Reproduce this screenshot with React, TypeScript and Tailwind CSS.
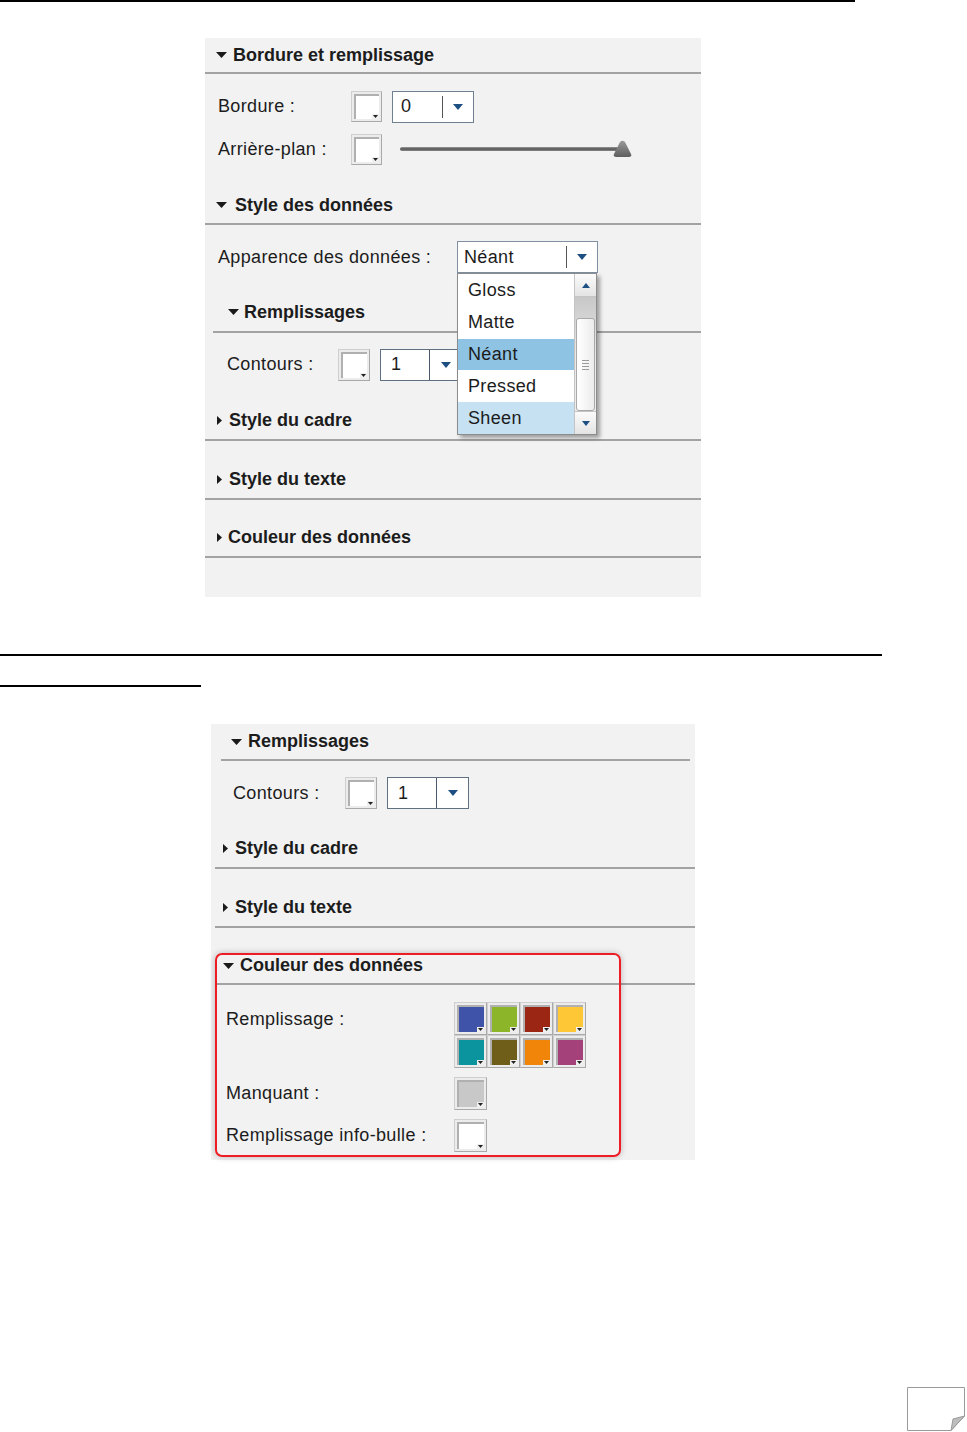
import React from "react";

const TriDown = () => (
  <svg width="11" height="6" viewBox="0 0 11 6" className="shrink-0">
    <path d="M0 0H11L5.5 6Z" fill="#1a1a1a" />
  </svg>
);
const TriRight = () => (
  <svg width="5" height="9" viewBox="0 0 5 9" className="shrink-0">
    <path d="M0 0L5 4.5L0 9Z" fill="#1a1a1a" />
  </svg>
);
const BlueTri = ({ up = false }: { up?: boolean }) => (
  <svg width="10" height="6" viewBox="0 0 10 6" className="shrink-0">
    <path d={up ? "M0 6H10L5 0Z" : "M0 0H10L5 6Z"} fill="#1d4f82" />
  </svg>
);
const SmallTri = ({ up = false }: { up?: boolean }) => (
  <svg width="8" height="5" viewBox="0 0 8 5" className="shrink-0">
    <path d={up ? "M0 5H8L4 0Z" : "M0 0H8L4 5Z"} fill="#1d4f82" />
  </svg>
);

function Header({
  label,
  open,
  cls,
  gap = "ml-[7px]",
}: {
  label: string;
  open?: boolean;
  cls: string;
  gap?: string;
}) {
  return (
    <div className={`flex items-center border-b-2 border-[#a3a3a3] ${cls}`}>
      {open ? <TriDown /> : <TriRight />}
      <span className={`font-bold text-[18px] tracking-[0px] text-[#1c1c1c] ${gap}`}>{label}</span>
    </div>
  );
}

function Swatch({ fill, size }: { fill: string; size: string }) {
  return (
    <div className={`relative ${size} shrink-0 bg-[#ececec] border border-[#cfcfcf] border-r-[#a9a9a9] border-b-[#a9a9a9] p-[2px]`}>
      <div className={`w-full h-full border-t-2 border-l-2 border-[#b0b0b0] ${fill}`} />
      <div className="absolute right-[2px] bottom-[2px] w-[7px] h-[5px] bg-[#efefef] flex items-center justify-center">
        <svg width="5" height="3" viewBox="0 0 5 3">
          <path d="M0 0H5L2.5 3Z" fill="#222" />
        </svg>
      </div>
    </div>
  );
}

function SpinnerFull({ value }: { value: string }) {
  return (
    <div className="flex w-[82px] h-[32px] border border-[#5f7080] bg-white shrink-0">
      <div className="w-[49px] flex items-center pl-[10px] border-r border-[#4a5a6a] text-[18px] text-[#1c1c1c]">{value}</div>
      <div className="flex-1 flex items-center justify-center">
        <BlueTri />
      </div>
    </div>
  );
}

const colors = [
  "bg-[#3f54a8]",
  "bg-[#8db52a]",
  "bg-[#9b2614]",
  "bg-[#fdc735]",
  "bg-[#0b939e]",
  "bg-[#6f5e1a]",
  "bg-[#f0850a]",
  "bg-[#a4407a]",
];

export default function App() {
  return (
    <div className="relative w-[967px] h-[1432px] overflow-hidden bg-white font-['Liberation_Sans',Arial,sans-serif] text-[#1c1c1c] tracking-[0.35px]">
      <div className="h-[2px] w-[855px] bg-black" />

      {/* Panel 1 */}
      <div className="relative ml-[205px] mt-[36px] w-[496px] bg-[#f2f2f2] pb-[39px]">
        <Header open label="Bordure et remplissage" cls="h-[36px] pl-[11px]" gap="ml-[6px]" />
        <div className="pt-[17px] pl-[13px] flex flex-col gap-[12px]">
          <div className="flex items-center h-[31px]">
            <span className="w-[133px] shrink-0 text-[18px]">Bordure :</span>
            <Swatch fill="bg-white" size="w-[31px] h-[31px]" />
            <div className="ml-[10px] flex items-center w-[82px] h-[32px] border border-[#6f8090] bg-white">
              <span className="pl-[8px] w-[49px] text-[18px]">0</span>
              <div className="w-px h-[22px] bg-[#555]" />
              <div className="flex-1 flex justify-center">
                <BlueTri />
              </div>
            </div>
          </div>
          <div className="flex items-center h-[31px]">
            <span className="w-[133px] shrink-0 text-[18px]">Arrière-plan :</span>
            <Swatch fill="bg-white" size="w-[31px] h-[31px]" />
            <svg width="236" height="20" viewBox="0 0 236 20" className="ml-[18px]">
              <defs>
                <linearGradient id="sl" x1="0" y1="0" x2="0" y2="1">
                  <stop offset="0" stopColor="#9a9a9a" />
                  <stop offset="0.5" stopColor="#555" />
                  <stop offset="1" stopColor="#8a8a8a" />
                </linearGradient>
                <linearGradient id="th" x1="0" y1="0" x2="0" y2="1">
                  <stop offset="0" stopColor="#9a9a9a" />
                  <stop offset="1" stopColor="#5e5e5e" />
                </linearGradient>
              </defs>
              <rect x="0" y="7" width="226" height="4" rx="2" fill="url(#sl)" />
              <path d="M220 2 Q222.5 -0.5 225 2 L231 14 Q232 17 229 17 H216 Q213 17 214 14 Z" fill="url(#th)" />
            </svg>
          </div>
        </div>
        <Header open label="Style des données" cls="mt-[22px] h-[38px] pl-[11px]" gap="ml-[8px]" />
        <div className="pt-[16px] pl-[13px] flex items-center h-[32px] box-content">
          <span className="w-[239px] shrink-0 text-[18px]">Apparence des données :</span>
          <div className="flex items-center w-[141px] h-[32px] border border-[#7f90a2] bg-white">
            <span className="pl-[6px] w-[108px] text-[18px]">Néant</span>
            <div className="w-px h-[22px] bg-[#555]" />
            <div className="flex-1 flex justify-center">
              <BlueTri />
            </div>
          </div>
        </div>
        <div className="ml-[8px]">
          <Header open label="Remplissages" cls="mt-[20px] h-[40px] pl-[15px]" gap="ml-[5px]" />
        </div>
        <div className="pt-[16px] pl-[22px] flex items-center h-[31px] box-content">
          <span className="w-[111px] shrink-0 text-[18px]">Contours :</span>
          <Swatch fill="bg-white" size="w-[32px] h-[32px]" />
          <div className="ml-[10px]">
            <SpinnerFull value="1" />
          </div>
        </div>
        <Header label="Style du cadre" cls="mt-[21px] h-[40px] pl-[12px]" />
        <Header label="Style du texte" cls="mt-[19px] h-[40px] pl-[12px]" />
        <Header label="Couleur des données" cls="mt-[18px] h-[40px] pl-[12px]" gap="ml-[6px]" />

        {/* open dropdown list */}
        <div className="absolute left-[252px] top-[235px] w-[140px] h-[162px] bg-white border border-[#8c8c8c] shadow-[3px_3px_4px_rgba(0,0,0,0.35)] flex">
          <div className="flex-1 flex flex-col text-[18px] pt-[1px]">
            <div className="h-[32px] flex items-center pl-[10px]">Gloss</div>
            <div className="h-[32px] flex items-center pl-[10px]">Matte</div>
            <div className="h-[32px] flex items-center pl-[10px] bg-[#8ec3e3]">Néant</div>
            <div className="h-[32px] flex items-center pl-[10px]">Pressed</div>
            <div className="h-[32px] flex items-center pl-[10px] bg-[#c5e1f2]">Sheen</div>
          </div>
          <div className="w-[22px] flex flex-col border-l border-[#c4c4c4] bg-[#ededed]">
            <div className="h-[23px] flex items-center justify-center bg-linear-to-b from-[#fbfbfb] to-[#e4e4e4] border-b border-[#c4c4c4]">
              <SmallTri up />
            </div>
            <div className="flex-1 flex flex-col bg-linear-to-b from-[#c8c8c8] via-[#e8e8e8] to-[#ededed]">
              <div className="mt-[21px] mx-[1px] flex-1 rounded-[3px] border border-[#a8a8a8] bg-linear-to-r from-[#ffffff] to-[#ececec] flex flex-col items-center justify-center gap-[2px]">
                <div className="w-[7px] h-px bg-[#9a9a9a]" />
                <div className="w-[7px] h-px bg-[#9a9a9a]" />
                <div className="w-[7px] h-px bg-[#9a9a9a]" />
                <div className="w-[7px] h-px bg-[#9a9a9a]" />
              </div>
            </div>
            <div className="h-[23px] flex items-center justify-center bg-linear-to-b from-[#fbfbfb] to-[#e4e4e4] border-t border-[#c4c4c4]">
              <SmallTri />
            </div>
          </div>
        </div>
      </div>

      <div className="mt-[57px] h-[2px] w-[882px] bg-black" />
      <div className="mt-[29px] h-[2px] w-[201px] bg-black" />

      {/* Panel 2 */}
      <div className="relative ml-[211px] mt-[37px] w-[484px] bg-[#f2f2f2] pb-[8px]">
        <div className="ml-[10px] mr-[5px]">
          <Header open label="Remplissages" cls="h-[37px] pl-[10px]" gap="ml-[6px]" />
        </div>
        <div className="pt-[16px] pl-[22px] flex items-center h-[32px] box-content">
          <span className="w-[112px] shrink-0 text-[18px]">Contours :</span>
          <Swatch fill="bg-white" size="w-[32px] h-[32px]" />
          <div className="ml-[10px]">
            <SpinnerFull value="1" />
          </div>
        </div>
        <div className="ml-[4px]">
          <Header label="Style du cadre" cls="mt-[20px] h-[40px] pl-[8px]" />
          <Header label="Style du texte" cls="mt-[19px] h-[40px] pl-[8px]" />
          <Header open label="Couleur des données" cls="mt-[18px] h-[39px] pl-[8px] pt-[2px]" gap="ml-[6px]" />
        </div>
        <div className="pt-[17px] pl-[15px] flex flex-col">
          <div className="flex">
            <span className="w-[228px] shrink-0 text-[18px] mt-[4px]">Remplissage :</span>
            <div className="grid grid-cols-4">
              {colors.map((c) => (
                <Swatch key={c} fill={c} size="w-[33px] h-[33px]" />
              ))}
            </div>
          </div>
          <div className="flex items-center mt-[9px]">
            <span className="w-[228px] shrink-0 text-[18px]">Manquant :</span>
            <Swatch fill="bg-[#c8c8c8]" size="w-[33px] h-[33px]" />
          </div>
          <div className="flex items-center mt-[9px]">
            <span className="w-[228px] shrink-0 text-[18px]">Remplissage info-bulle :</span>
            <Swatch fill="bg-white" size="w-[33px] h-[33px]" />
          </div>
        </div>

        {/* red highlight annotation */}
        <div className="absolute left-[4px] top-[229px] w-[406px] h-[204px] border-[2.5px] border-[#ee1c25] rounded-[7px] shadow-[0_0_6px_rgba(0,0,0,0.25)]" />
      </div>

      <div className="mt-[227px] flex justify-end pr-[1px]">
        <svg width="59" height="44" viewBox="0 0 59 44">
          <path d="M0.5 0.5H57.5V29L44 43.5H0.5Z" fill="#fff" stroke="#9a9a9a" />
          <path d="M57.5 29L44 43.5L46 32Z" fill="#bdbdbd" stroke="#9a9a9a" strokeLinejoin="round" />
        </svg>
      </div>
    </div>
  );
}
